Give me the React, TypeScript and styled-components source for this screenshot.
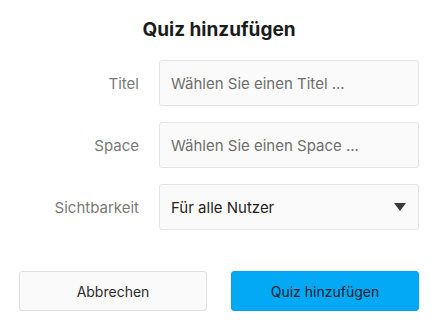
import React from 'react'
import styled, { createGlobalStyle } from 'styled-components'

const GlobalStyle = createGlobalStyle`
  html, body {
    margin: 0;
    padding: 0;
    background: #ffffff;
  }
  body {
    font-family: Inter, "Noto Sans", sans-serif;
    color: #1f1f1f;
  }
`

const Dialog = styled.div`
  box-sizing: border-box;
  width: 442px;
  height: 330px;
  padding: 19px 23px 0 19px;
  display: flex;
  flex-direction: column;
`

const Heading = styled.h2`
  margin: 0 0 19px;
  font-size: 19px;
  line-height: 22px;
  font-weight: 700;
  text-align: center;
  color: #1c1c1c;
`

const Form = styled.div`
  display: flex;
  flex-direction: column;
  gap: 16px;
`

const Row = styled.div`
  display: grid;
  grid-template-columns: 120px 1fr;
  column-gap: 20px;
  align-items: center;
`

const Label = styled.label`
  text-align: right;
  font-size: 15px;
  color: #7a7a7a;
`

const Field = styled.div`
  box-sizing: border-box;
  height: 46px;
  display: flex;
  align-items: center;
  justify-content: space-between;
  padding: 0 10px 0 11px;
  background: #fafafa;
  border: 1px solid #e4e4e4;
  border-radius: 3px;
  font-size: 15px;
`

const Placeholder = styled.span`
  color: #6e6e6e;
`

const Value = styled.span`
  color: #1f1f1f;
`

const Caret = styled.span`
  width: 0;
  height: 0;
  border-left: 6px solid transparent;
  border-right: 6px solid transparent;
  border-top: 8px solid #3a3a3a;
  margin-right: 2px;
`

const Actions = styled.div`
  margin-top: 41px;
  display: grid;
  grid-template-columns: 1fr 1fr;
  column-gap: 24px;
`

const Button = styled.button<{ primary?: boolean }>`
  box-sizing: border-box;
  height: 40px;
  border-radius: 3px;
  font-family: inherit;
  font-size: 14px;
  color: ${props => (props.primary ? '#14202a' : '#2b2b2b')};
  background: ${props => (props.primary ? '#03a9f4' : '#fafafa')};
  border: 1px solid ${props => (props.primary ? '#03a3ec' : '#e0e0e0')};
  cursor: pointer;
`

const App: React.FC = () => {
  return (
    <>
      <GlobalStyle />
      <Dialog>
        <Heading>Quiz hinzufügen</Heading>
        <Form>
          <Row>
            <Label>Titel</Label>
            <Field>
              <Placeholder>Wählen Sie einen Titel ...</Placeholder>
            </Field>
          </Row>
          <Row>
            <Label>Space</Label>
            <Field>
              <Placeholder>Wählen Sie einen Space ...</Placeholder>
            </Field>
          </Row>
          <Row>
            <Label>Sichtbarkeit</Label>
            <Field>
              <Value>Für alle Nutzer</Value>
              <Caret />
            </Field>
          </Row>
        </Form>
        <Actions>
          <Button>Abbrechen</Button>
          <Button primary>Quiz hinzufügen</Button>
        </Actions>
      </Dialog>
    </>
  )
}

export default App
